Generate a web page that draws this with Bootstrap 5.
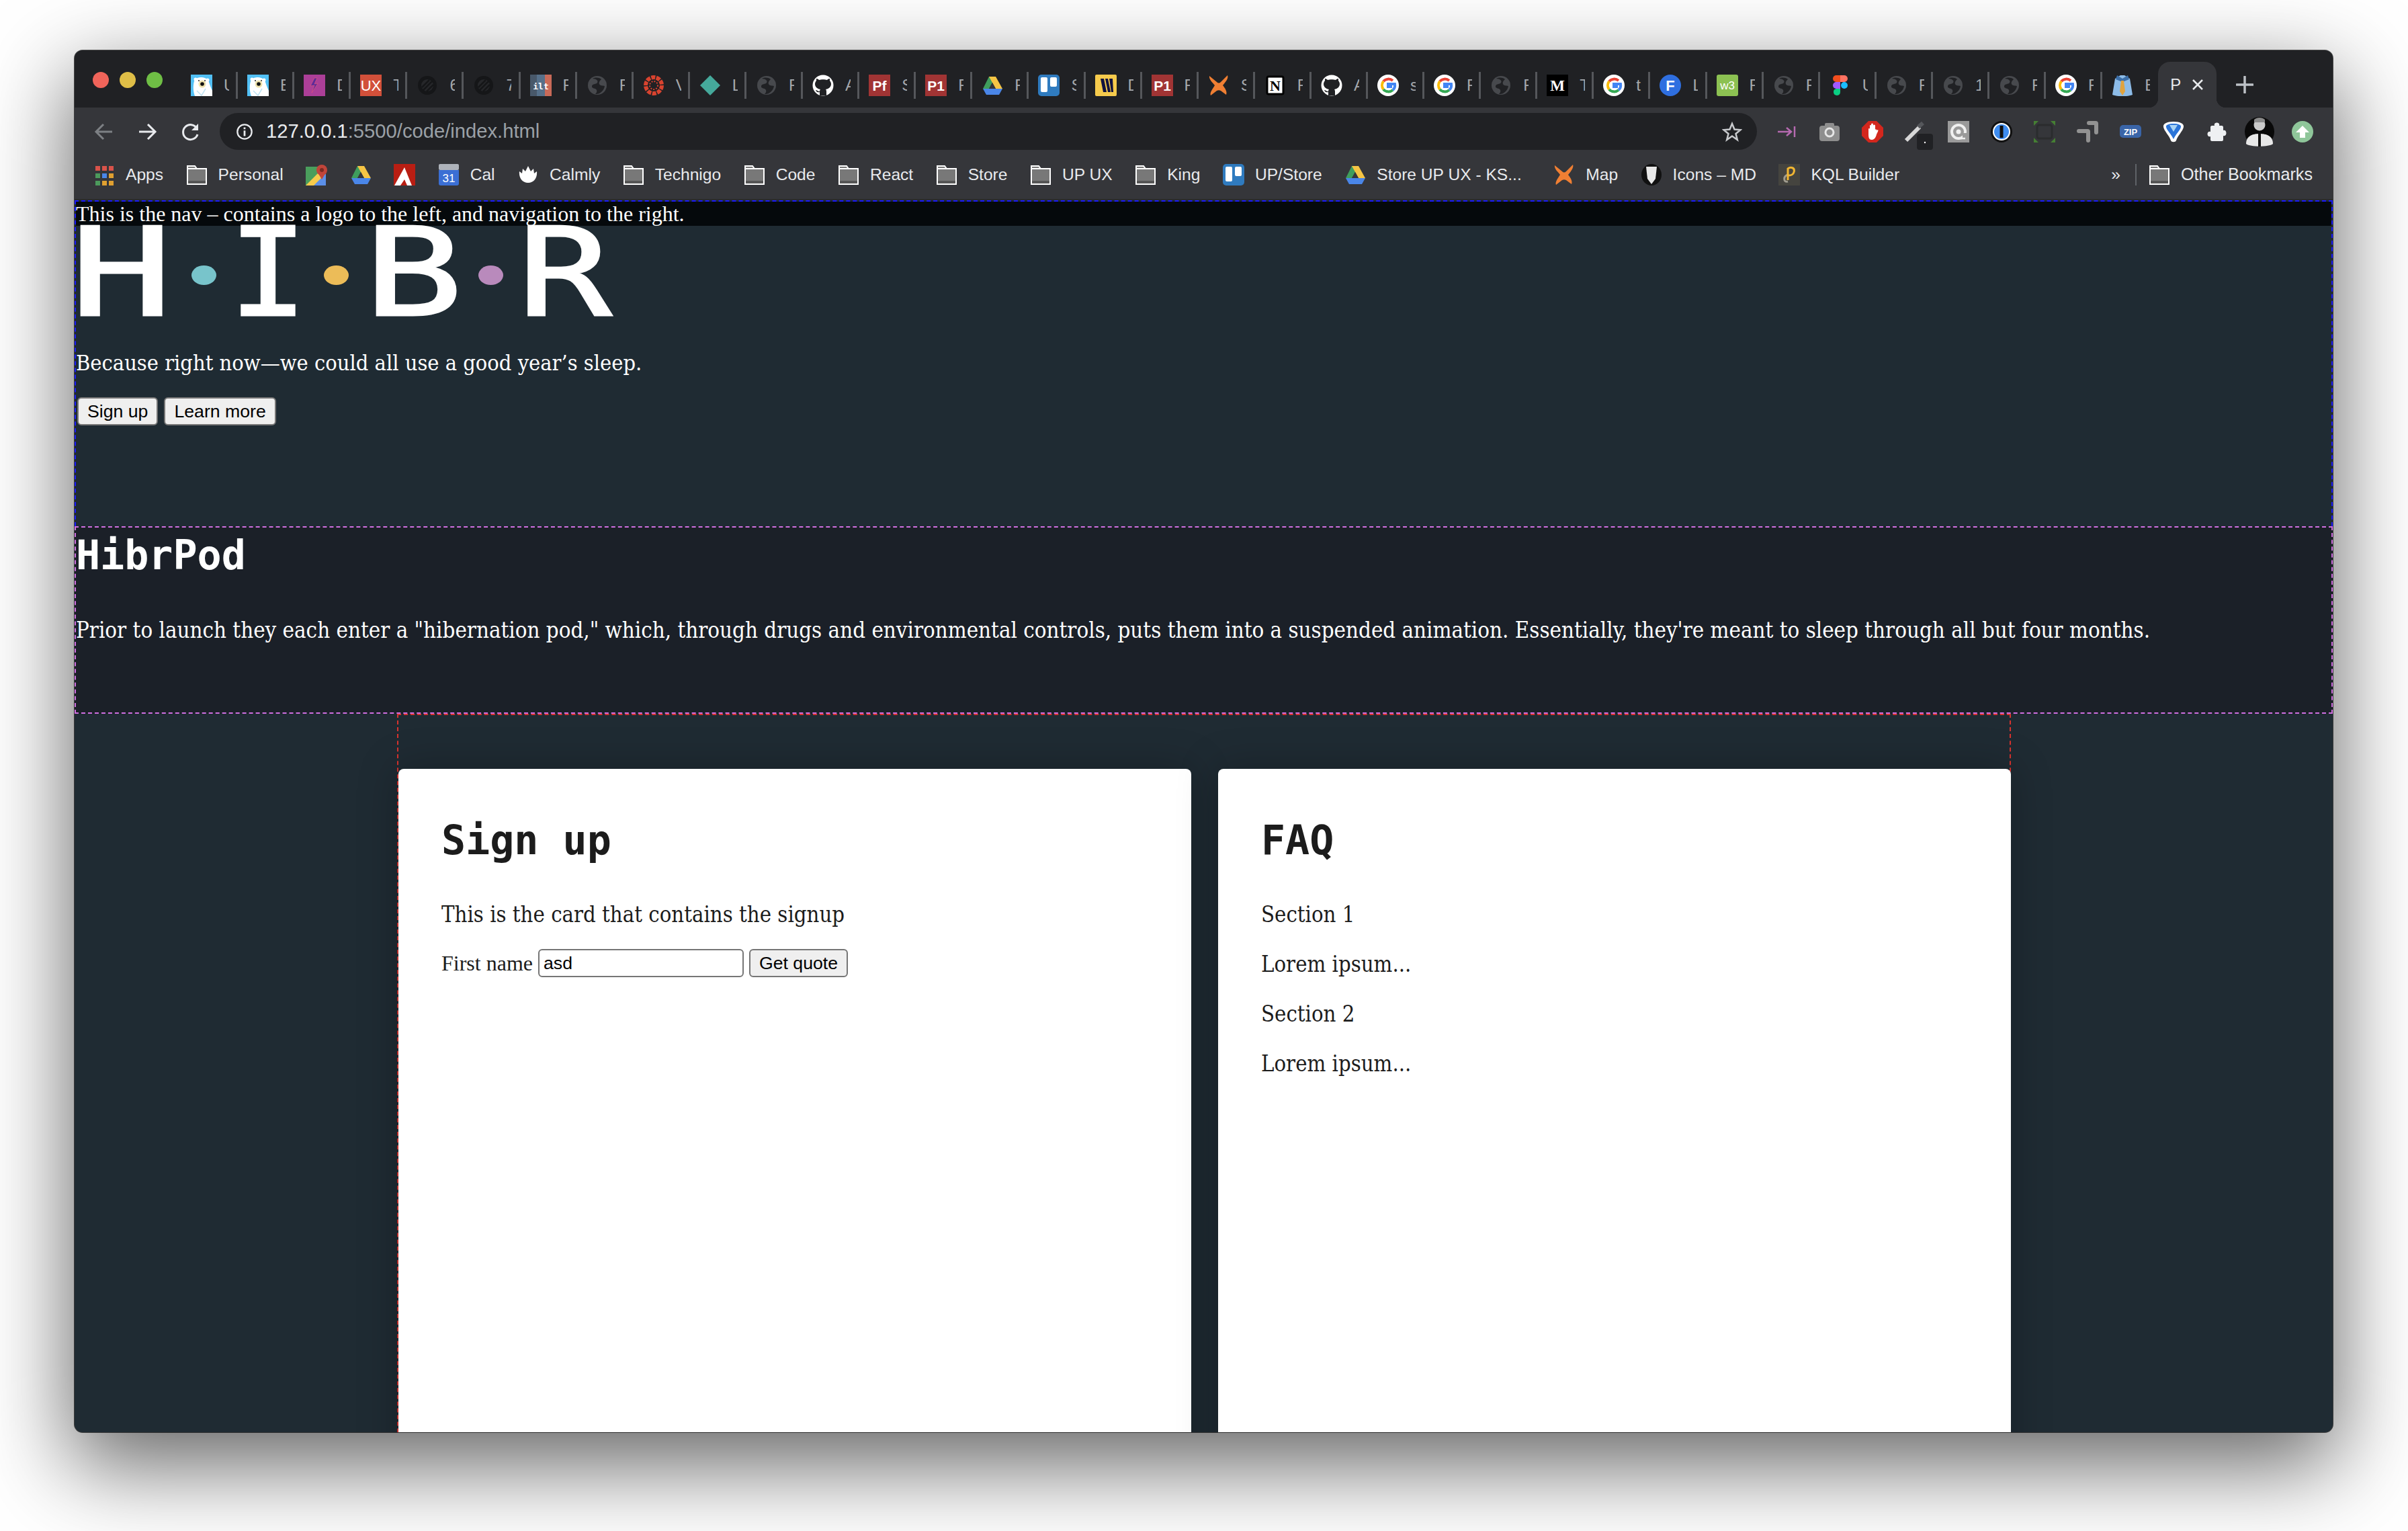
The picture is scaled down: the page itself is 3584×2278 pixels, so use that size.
<!DOCTYPE html>
<html lang="en">

<head>
  <meta charset="UTF-8">
  <meta name="viewport" content="width=device-width, initial-scale=1.0">
  <title>HibrPod</title>
  <link href="https://cdn.jsdelivr.net/npm/bootstrap@5.3.0/dist/css/bootstrap.min.css" rel="stylesheet">
  <style>
    html, body { background: #fff; }
    body { height: 2278px; padding: 75px 112px 0 111px; overflow: hidden; }

    /* browser window */
    .win { height: 2056px; border-radius: 12px; overflow: hidden; background: #1f2b33; box-shadow: 0 44px 130px 6px rgba(0,0,0,.6), 0 0 0 1px #555; }
    .tabstrip { height: 85px; flex: none; background: #202124; padding-left: 159px; font: 24px "Liberation Sans", sans-serif; color: #c8cacd; }
    .lights { width: 159px; margin-left: -159px; padding-left: 27px; gap: 16px; height: 88px; flex: none; }
    .lights i { width: 24px; height: 24px; border-radius: 50%; }
    .lamp-r { background: #f0645a; }
    .lamp-y { background: #dfbe47; }
    .lamp-g { background: #6fbe45; }
    .tabx { width: 84.1px; height: 40px; padding-left: 14px; gap: 17px; overflow: hidden; flex: none; border-right: 3px solid #55575b; margin-top: 32px; }
    .tabx span { width: 8px; overflow: hidden; flex: none; font-size: 24px; opacity: .8; }
    .tabx svg, .bmk svg { width: 32px; height: 32px; flex: none; }
    .tabx.bare { border-right: 0; }
    .tab-on { width: 87px; height: 68px; margin-top: 17px; background: #35363a; border-radius: 18px 18px 0 0; padding-left: 18px; gap: 16px; color: #e8eaed; flex: none; margin-left: -1px; position: relative; }
    .tab-on::before, .tab-on::after { content: ""; position: absolute; bottom: 0; width: 14px; height: 14px; }
    .tab-on::before { left: -14px; background: radial-gradient(circle at 0 0, transparent 14px, #35363a 14.5px); }
    .tab-on::after { right: -14px; background: radial-gradient(circle at 100% 0, transparent 14px, #35363a 14.5px); }
    .tab-plus { margin-left: 29px; width: 26px; height: 26px; margin-top: 38px; flex: none; }

    .toolbar { height: 63px; flex: none; background: #35363a; padding: 8px 0 0 12px; }
    .nav-ico { width: 64px; height: 55px; flex: none; }
    .urlpill { width: 2288px; height: 55px; margin-left: 12px; flex: none; background: #202124; border-radius: 28px; padding: 0 22px 0 24px; gap: 19px; font: 29.2px "Liberation Sans", sans-serif; color: #9aa0a6; }
    .urlpill b { font-weight: 400; color: #e8eaed; }
    .exts { margin-left: 12px; flex: none; }
    .exts div { width: 64px; height: 55px; display: flex; justify-content: center; align-items: center; }
    .exts svg { width: 32px; height: 32px; overflow: visible; }

    .bookmarks { height: 73px; flex: none; background: #35363a; padding: 0 30px 0 28px; gap: 33.5px; font: 24.6px "Liberation Sans", sans-serif; color: #e8eaed; }
    .bmk { gap: 16px; white-space: nowrap; flex: none; }
    .bmk-map { margin-left: 14px; }
    .bmk-other { font-size: 25.2px; }
    .bmk-sep { width: 2px; height: 32px; background: #5f6368; margin: 0 -15px 0 -12px; }
    .thin { height: 2px; flex: none; background: #2a2b2e; }

    /* the page */
    .pagearea { font-family: "DejaVu Serif Condensed", "DejaVu Serif", serif; font-size: 32.6px; color: #fff; line-height: 42px; }
    .head-wrap { border: 2px dashed #1a1aff; border-bottom: 0; height: 485px; }
    .topnav { background: #05090c; height: 36px; font: 32px/36px "Liberation Serif", serif; white-space: nowrap; }
    .logo { height: 137px; position: relative; }
    .logo span { position: absolute; top: 2px; font: 400 182px/137px "DejaVu Sans Mono", monospace; -webkit-text-stroke: 3px #fff; transform-origin: left center; }
    .logo i { position: absolute; width: 37px; height: 29px; top: 59px; border-radius: 50%; }
    .lt-h { left: -8px; transform: scaleX(1.38); }
    .lt-i { left: 228px; transform: scaleX(1.06); }
    .lt-b { left: 429px; transform: scaleX(1.34); }
    .lt-r { left: 658px; transform: scaleX(1.27); }
    .dot-a { left: 172px; background: #78c4cb; }
    .dot-b { left: 369px; background: #ecbc58; }
    .dot-c { left: 599px; background: #b98abc; }
    .tagline { margin: 46px 0 0; font-size: 32.3px; }
    .plain-btn { font: 26.67px "Liberation Sans", sans-serif; line-height: 30px; color: #000; background: #efefef; border: 2px solid #767676; border-radius: 6px; padding: 2px 13px; height: 42px; }
    .plain-btn:hover { background: #e5e5e5; color: #000; border-color: #767676; }
    .cta { gap: 9px; margin: 30px 0 0 2px; }

    .pod { height: 279px; background: #1b2028; border: 2px dashed #cf6fe0; }
    .pod h2, .boxy h2 { font: 700 60px/70px "DejaVu Sans Mono", monospace; margin: 0; }
    .pod h2 { padding-top: 6px; }
    .pod p { margin: 56px 0 0; white-space: nowrap; font-size: 32.77px; }

    .cols { width: 2402px; margin: 0 0 0 480px; border: 2px dashed #d8332f; border-bottom: 0; padding-top: 80px; gap: 40px; height: 1200px; }
    .boxy { width: 1180px; height: 1100px; border: 0; border-radius: 8px; background: #fff; color: #1c1c1c; padding: 69px 64px 0; box-shadow: 0 0 60px rgba(0,0,0,.25); flex: none; }
    .boxy h2 { margin: 0 0 53px; line-height: 74px; }
    .boxy p { margin: 0 0 32px; }
    .signup-line { font: 32px "Liberation Serif", serif; gap: 8px; margin-top: -2px; }
    .firstname { width: 306px; height: 42px; padding: 1px 6px; border: 2px solid #767676; border-radius: 6px; font: 26.67px "Liberation Sans", sans-serif; color: #000; background: #fff; }
  </style>
</head>

<body>
  <svg width="0" height="0" class="position-absolute">
    <defs>
      <symbol id="bear" viewBox="0 0 32 32"><rect width="32" height="32" fill="#52c0f5"/><path d="M6 32C3 24 3 14 6 7c6-4 14-4 20 1 2 6 3 10 6 16v8z" fill="#fff"/><circle cx="7" cy="7" r="2.500" fill="#fff"/><circle cx="25" cy="8" r="2.500" fill="#fff"/><circle cx="12" cy="9" r="1" fill="#222"/><circle cx="21" cy="9" r="1" fill="#222"/><circle cx="17" cy="14" r="5.500" fill="#efe3ad"/><circle cx="17" cy="14" r="2.800" fill="#111"/><path d="M9 24l7 7 6-10" fill="none" stroke="#bfe3f2" stroke-width="1.500"/></symbol>
      <symbol id="bolt" viewBox="0 0 32 32"><rect width="32" height="32" fill="#ac3f98"/><path d="M16 5l-6 12 6-1-4 11 9-14-5 1 4-9z" fill="#5d2a9a" stroke="#e0567a" stroke-width=".7"/></symbol>
      <symbol id="ux" viewBox="0 0 32 32"><rect width="32" height="32" fill="#d2503a"/><text x="16" y="24" text-anchor="middle" font-family="Liberation Sans" font-size="22" fill="#fff">UX</text></symbol>
      <symbol id="darkc" viewBox="0 0 32 32"><circle cx="16" cy="16" r="14" fill="#151618"/><circle cx="16" cy="16" r="9" fill="#26272a"/><path d="M8 19L19 8M10 23L23 10M15 25L25 15" stroke="#151618" stroke-width="2.500"/></symbol>
      <symbol id="ilt" viewBox="0 0 32 32"><rect width="32" height="32" fill="#56708a"/><rect width="10" height="32" fill="#48586a"/><rect x="22" width="10" height="32" fill="#c96a58"/><text x="16" y="22" text-anchor="middle" font-family="DejaVu Sans Mono" font-weight="700" font-size="13" fill="#fff">ilt</text></symbol>
      <symbol id="globe" viewBox="0 0 32 32"><circle cx="16" cy="16" r="14" fill="#47494d"/><path d="M9 6c5 0 9 3 7 6s-7 1-8 5 6 3 7 6-1 5-2 6c6 1 13-5 14-12-3-1-7 0-8-3s1-5 3-7c-4-3-9-3-13-1z" fill="#202124"/></symbol>
      <symbol id="redring" viewBox="0 0 32 32"><circle cx="16" cy="16" r="12" fill="none" stroke="#d8432f" stroke-width="6" stroke-dasharray="6 1.500"/><circle cx="16" cy="16" r="6" fill="none" stroke="#d8432f" stroke-width="2" stroke-dasharray="2 2"/></symbol>
      <symbol id="diamond" viewBox="0 0 32 32"><path d="M16 1l15 15-15 15L1 16z" fill="#45a99b"/></symbol>
      <symbol id="octo" viewBox="0 0 32 32"><circle cx="16" cy="16" r="15.500" fill="#fff"/><path d="M11 31v-5c-4 1-5-1-6-3 2 0 3 2 6 2 0-2 1-3 1-3-5-1-8-4-8-8 0-2 1-4 2-5V6c2 0 3 1 4 2 3-1 9-1 12 0 1-1 2-2 4-2v3c1 1 2 3 2 5 0 4-3 7-8 8 0 0 1 1 1 3v6z" fill="#202124"/></symbol>
      <symbol id="pf" viewBox="0 0 32 32"><rect width="32" height="32" fill="#a13434"/><text x="16" y="24" text-anchor="middle" font-family="Liberation Sans" font-weight="700" font-size="21" fill="#fff">Pf</text></symbol>
      <symbol id="p1" viewBox="0 0 32 32"><rect width="32" height="32" fill="#a13434"/><text x="16" y="24" text-anchor="middle" font-family="Liberation Sans" font-weight="700" font-size="21" fill="#fff">P1</text></symbol>
      <symbol id="drive" viewBox="0 0 32 32"><path d="M11 3h10L11 21H5L2 21z" fill="#3f9d5c"/><path d="M11 3h10l10 18H21z" fill="#f6c544"/><path d="M11 21h20l-5 9H7L2 21z" fill="#4a86e8"/><path d="M11 21h10l-5-9z" fill="#35363a"/></symbol>
      <symbol id="trello" viewBox="0 0 32 32"><rect width="32" height="32" rx="5" fill="#2f7bbf"/><rect x="4" y="4" width="10" height="22" rx="2" fill="#fff"/><rect x="18" y="4" width="10" height="14" rx="2" fill="#fff"/></symbol>
      <symbol id="miro" viewBox="0 0 32 32"><rect width="32" height="32" rx="2" fill="#f6cb4c"/><path d="M8 6h5l4 20h-5zM15 6h4l4 20h-4zM21 6h5l1 20h-3z" fill="#11123e"/></symbol>
      <symbol id="xo" viewBox="0 0 32 32"><path d="M2 2l11 9c2 2 4 2 6 0L29 1c2 5-4 11-7 15 3 4 7 9 5 14l-8-6c-2-1-4-1-6 0l-9 7c-2-4 3-10 6-15C7 12 1 7 2 2z" fill="#f07f33"/></symbol>
      <symbol id="notion" viewBox="0 0 32 32"><rect x="4" y="3" width="24" height="26" rx="2" fill="#fff" stroke="#000" stroke-width="3"/><text x="16" y="24" text-anchor="middle" font-family="Liberation Serif" font-weight="700" font-size="22" fill="#000">N</text></symbol>
      <symbol id="google" viewBox="0 0 32 32"><circle cx="16" cy="16" r="16" fill="#fff"/><path d="M23 9a10 10 0 0 0-14 1" fill="none" stroke="#ea4335" stroke-width="4"/><path d="M9 10a10 10 0 0 0 0 12" fill="none" stroke="#fbbc05" stroke-width="4"/><path d="M9 22a10 10 0 0 0 14 1" fill="none" stroke="#34a853" stroke-width="4"/><path d="M23 23a10 10 0 0 0 3-9H16v4h6" fill="none" stroke="#4285f4" stroke-width="4"/></symbol>
      <symbol id="medium" viewBox="0 0 32 32"><rect width="32" height="32" fill="#000"/><text x="16" y="24" text-anchor="middle" font-family="Liberation Serif" font-weight="700" font-size="23" fill="#fff">M</text></symbol>
      <symbol id="fblue" viewBox="0 0 32 32"><circle cx="16" cy="16" r="16" fill="#2f6fe0"/><text x="16" y="24" text-anchor="middle" font-family="Liberation Sans" font-weight="700" font-size="22" fill="#fff">F</text></symbol>
      <symbol id="w3" viewBox="0 0 32 32"><rect width="32" height="32" rx="3" fill="#8cc152"/><text x="16" y="22" text-anchor="middle" font-family="Liberation Sans" font-size="17" fill="#fff">w3</text></symbol>
      <symbol id="figma" viewBox="0 0 32 32"><path d="M10 1h6v10h-6a5 5 0 0 1 0-10z" fill="#f24e1e"/><path d="M16 1h6a5 5 0 0 1 0 10h-6z" fill="#ff7262"/><path d="M10 11h6v10h-6a5 5 0 0 1 0-10z" fill="#a259ff"/><circle cx="22" cy="16" r="5" fill="#1abcfe"/><path d="M10 21h6v5a5 5 0 1 1-6-5z" fill="#0acf83"/></symbol>
      <symbol id="shirt" viewBox="0 0 32 32"><path d="M5 6l8-5h6l8 5 4 24c-8 3-22 3-30 0z" fill="#8dbce8"/><path d="M8 1l8 5 8-5 2 6-10 4L6 7z" fill="#3c6fa8"/><path d="M14 9h4l2 16-4 6-4-6z" fill="#e0a33e"/></symbol>
      <symbol id="folder" viewBox="0 0 32 32"><path d="M2 3h11l3 4h14v23H2z" fill="#787878" stroke="#fff" stroke-width="2"/><path d="M2 7h28" stroke="#fff" stroke-width="2"/><path d="M3 25h26v4H3z" fill="#555"/></symbol>
      <symbol id="apps" viewBox="0 0 32 32"><rect x="3" y="3" width="7" height="7" fill="#d9534a"/><rect x="13" y="3" width="7" height="7" fill="#d9534a"/><rect x="23" y="3" width="7" height="7" fill="#d9534a"/><rect x="3" y="14" width="7" height="7" fill="#4c9a5c"/><rect x="13" y="14" width="7" height="7" fill="#4a86e8"/><rect x="23" y="14" width="7" height="7" fill="#e0a030"/><rect x="3" y="25" width="7" height="7" fill="#4c9a5c"/><rect x="13" y="25" width="7" height="7" fill="#e0a030"/><rect x="23" y="25" width="7" height="7" fill="#e0a030"/></symbol>
      <symbol id="maps" viewBox="0 0 32 32"><rect y="4" width="30" height="28" fill="#4a9e5c"/><path d="M0 32l22-22 8 8v14z" fill="#f6cb4c"/><path d="M12 32l18-18v18z" fill="#5b8fe8"/><circle cx="24" cy="9" r="8" fill="#c0453a"/><circle cx="24" cy="9" r="3" fill="#7a2a22"/><path d="M18 13l6 10 6-10z" fill="#c0453a"/></symbol>
      <symbol id="adobe" viewBox="0 0 32 32"><rect width="32" height="32" fill="#b91e13"/><path d="M16 5l11 27h-7l-4-9-6 9H1z" fill="#fff"/><path d="M1 0h8L1 22zM23 0h9v24z" fill="#b91e13"/></symbol>
      <symbol id="cal" viewBox="0 0 32 32"><path d="M1 9h30v20a3 3 0 0 1-3 3H4a3 3 0 0 1-3-3z" fill="#3b6fd4"/><rect x="1" width="30" height="9" rx="2" fill="#aeb3ba"/><text x="16" y="27" text-anchor="middle" font-family="Liberation Sans" font-size="17" fill="#fff">31</text></symbol>
      <symbol id="calmly" viewBox="0 0 32 32"><path d="M16 3l4 8 4-4 1 7 4-3c1 9-4 17-13 17S2 20 3 11l4 3 1-7 4 4z" fill="#fff"/></symbol>
      <symbol id="mdicon" viewBox="0 0 32 32"><ellipse cx="16" cy="16" rx="15" ry="16" fill="#111"/><path d="M8 4h16l-2 18-6 8-6-8z" fill="#e8e8e8"/></symbol>
      <symbol id="kql" viewBox="0 0 32 32"><rect width="32" height="32" fill="#45443f"/><path d="M14 26c-7 2-7-8 0-10" fill="none" stroke="#a09c8f" stroke-width="3"/><path d="M14 24V7c4-3 11-2 9 5-1 4-5 5-8 5" fill="none" stroke="#f2b632" stroke-width="3"/></symbol>
    </defs>
  </svg>

  <div class="win d-flex flex-column">
    <!-- tabs -->
    <div class="tabstrip d-flex align-items-start">
      <div class="lights d-flex align-items-center">
        <i class="lamp-r"></i><i class="lamp-y"></i><i class="lamp-g"></i>
      </div>
      <div class="tabx d-flex align-items-center"><svg><use href="#bear"/></svg><span>U</span></div>
      <div class="tabx d-flex align-items-center"><svg><use href="#bear"/></svg><span>E</span></div>
      <div class="tabx d-flex align-items-center"><svg><use href="#bolt"/></svg><span>D</span></div>
      <div class="tabx d-flex align-items-center"><svg><use href="#ux"/></svg><span>T</span></div>
      <div class="tabx d-flex align-items-center"><svg><use href="#darkc"/></svg><span>6</span></div>
      <div class="tabx d-flex align-items-center"><svg><use href="#darkc"/></svg><span>7</span></div>
      <div class="tabx d-flex align-items-center"><svg><use href="#ilt"/></svg><span>F</span></div>
      <div class="tabx d-flex align-items-center"><svg><use href="#globe"/></svg><span>F</span></div>
      <div class="tabx d-flex align-items-center"><svg><use href="#redring"/></svg><span>V</span></div>
      <div class="tabx d-flex align-items-center"><svg><use href="#diamond"/></svg><span>L</span></div>
      <div class="tabx d-flex align-items-center"><svg><use href="#globe"/></svg><span>F</span></div>
      <div class="tabx d-flex align-items-center"><svg><use href="#octo"/></svg><span>A</span></div>
      <div class="tabx d-flex align-items-center"><svg><use href="#pf"/></svg><span>S</span></div>
      <div class="tabx d-flex align-items-center"><svg><use href="#p1"/></svg><span>F</span></div>
      <div class="tabx d-flex align-items-center"><svg><use href="#drive"/></svg><span>F</span></div>
      <div class="tabx d-flex align-items-center"><svg><use href="#trello"/></svg><span>S</span></div>
      <div class="tabx d-flex align-items-center"><svg><use href="#miro"/></svg><span>D</span></div>
      <div class="tabx d-flex align-items-center"><svg><use href="#p1"/></svg><span>F</span></div>
      <div class="tabx d-flex align-items-center"><svg><use href="#xo"/></svg><span>S</span></div>
      <div class="tabx d-flex align-items-center"><svg><use href="#notion"/></svg><span>F</span></div>
      <div class="tabx d-flex align-items-center"><svg><use href="#octo"/></svg><span>A</span></div>
      <div class="tabx d-flex align-items-center"><svg><use href="#google"/></svg><span>s</span></div>
      <div class="tabx d-flex align-items-center"><svg><use href="#google"/></svg><span>F</span></div>
      <div class="tabx d-flex align-items-center"><svg><use href="#globe"/></svg><span>F</span></div>
      <div class="tabx d-flex align-items-center"><svg><use href="#medium"/></svg><span>T</span></div>
      <div class="tabx d-flex align-items-center"><svg><use href="#google"/></svg><span>t</span></div>
      <div class="tabx d-flex align-items-center"><svg><use href="#fblue"/></svg><span>L</span></div>
      <div class="tabx d-flex align-items-center"><svg><use href="#w3"/></svg><span>F</span></div>
      <div class="tabx d-flex align-items-center"><svg><use href="#globe"/></svg><span>F</span></div>
      <div class="tabx d-flex align-items-center"><svg><use href="#figma"/></svg><span>U</span></div>
      <div class="tabx d-flex align-items-center"><svg><use href="#globe"/></svg><span>F</span></div>
      <div class="tabx d-flex align-items-center"><svg><use href="#globe"/></svg><span>1</span></div>
      <div class="tabx d-flex align-items-center"><svg><use href="#globe"/></svg><span>F</span></div>
      <div class="tabx d-flex align-items-center"><svg><use href="#google"/></svg><span>F</span></div>
      <div class="tabx bare d-flex align-items-center"><svg><use href="#shirt"/></svg><span>E</span></div>
      <div class="tab-on d-flex align-items-center"><span>P</span><svg width="18" height="18" viewBox="0 0 18 18"><path d="M2 2l14 14M16 2L2 16" stroke="#e8eaed" stroke-width="2.500"/></svg></div>
      <svg class="tab-plus" viewBox="0 0 26 26"><path d="M13 1v24M1 13h24" stroke="#bdc1c6" stroke-width="3.500" stroke-linecap="round"/></svg>
    </div>

    <!-- address bar -->
    <div class="toolbar d-flex align-items-start">
      <div class="nav-ico d-flex align-items-center justify-content-center"><svg width="30" height="30" viewBox="0 0 30 30"><path d="M27 15H4M14 4L3 15l11 11" fill="none" stroke="#7d8084" stroke-width="3"/></svg></div>
      <div class="nav-ico d-flex align-items-center justify-content-center"><svg width="30" height="30" viewBox="0 0 30 30"><path d="M3 15h23M16 4l11 11-11 11" fill="none" stroke="#e8eaed" stroke-width="3"/></svg></div>
      <div class="nav-ico d-flex align-items-center justify-content-center"><svg width="30" height="30" viewBox="0 0 30 30"><path d="M25 10a11 11 0 1 0 1 9" fill="none" stroke="#e8eaed" stroke-width="3"/><path d="M27 3v10H17z" fill="#e8eaed"/></svg></div>
      <div class="urlpill d-flex align-items-center">
        <svg class="flex-shrink-0" width="26" height="26" viewBox="0 0 28 28"><circle cx="14" cy="14" r="11.500" fill="none" stroke="#e8eaed" stroke-width="2.500"/><path d="M14 12v9M14 7v3" stroke="#e8eaed" stroke-width="3"/></svg>
        <div class="flex-grow-1"><b>127.0.0.1</b>:5500/code/index.html</div>
        <svg width="30" height="30" viewBox="0 0 30 30"><path d="M15 3l3.500 8.500 9 .7-7 5.800 2.300 9L15 21.500 7.200 27l2.300-9-7-5.800 9-.7z" fill="none" stroke="#c8cacd" stroke-width="2.500"/></svg>
      </div>
      <div class="exts d-flex">
        <div><svg viewBox="0 0 32 32"><path d="M3 16h20M16 10l7 6-7 6" fill="none" stroke="#b56ab0" stroke-width="2.500"/><path d="M28 8v16" stroke="#b56ab0" stroke-width="2.500"/></svg></div>
        <div><svg viewBox="0 0 32 32"><rect x="1" y="7" width="30" height="23" rx="4" fill="#8e8e8e"/><rect x="9" y="3" width="14" height="8" rx="2" fill="#8e8e8e"/><circle cx="16" cy="17" r="6" fill="none" stroke="#e6e6e6" stroke-width="3"/></svg></div>
        <div><svg viewBox="0 0 32 32"><path d="M10 0h12l10 10v12L22 32H10L0 22V10z" fill="#d3271d"/><path d="M10 22V12a1 1 0 0 1 2 0V7a1 1 0 0 1 2 0V5a1 1 0 0 1 3 0v2a1 1 0 0 1 3 0v6a1 1 0 0 1 2 1l2-1c1 1 0 3-2 7-1 4-3 8-7 8s-5-3-5-8z" fill="#fff"/></svg></div>
        <div><svg viewBox="0 0 32 32"><path d="M2 29L22 9" stroke="#d8d8d8" stroke-width="6"/><path d="M20 9l7-6" stroke="#55575b" stroke-width="6"/><rect x="18" y="19" width="24" height="24" rx="4" fill="#202124"/><circle cx="30" cy="32" r="1.200" fill="#fff"/></svg></div>
        <div><svg viewBox="0 0 32 32"><rect width="32" height="32" fill="#9a9a9a"/><circle cx="16" cy="16" r="10" fill="none" stroke="#f0f0f0" stroke-width="4"/><circle cx="16" cy="16" r="3.500" fill="#f0f0f0"/><rect x="22" y="18" width="7" height="9" fill="#9a9a9a"/><path d="M20 26h6" stroke="#f0f0f0" stroke-width="2.500"/></svg></div>
        <div><svg viewBox="0 0 32 32"><circle cx="16" cy="16" r="16" fill="#111"/><circle cx="16" cy="16" r="13" fill="#fff"/><circle cx="16" cy="16" r="11" fill="#3d8cf0"/><rect x="13.500" y="7" width="5" height="18" fill="#111"/></svg></div>
        <div><svg viewBox="0 0 32 32"><path d="M0 0h7L0 7zM32 0h-7l7 7zM0 32v-7l7 7zM32 32v-7l-7 7z" fill="#457f33"/><rect x="5" y="6" width="22" height="20" rx="3" fill="none" stroke="#2b2c2e" stroke-width="3"/></svg></div>
        <div><svg viewBox="0 0 32 32"><path d="M18 0h10a4 4 0 0 1 4 4v13a3 3 0 0 1-6 0V6h-8a3 3 0 0 1 0-6zM3 12h13a4 4 0 0 1 4 4v13a3 3 0 0 1-6 0V18H3a3 3 0 0 1 0-6z" fill="#929292"/></svg></div>
        <div><svg viewBox="0 0 32 32"><rect y="6" width="32" height="19" rx="5" fill="#3a65a8"/><text x="16" y="21" text-anchor="middle" font-family="Liberation Sans" font-weight="700" font-size="13" fill="#fff">ZIP</text></svg></div>
        <div><svg viewBox="0 0 32 32"><path d="M16 1C6 1 0 4 1 9c1 6 9 13 11 20 1 3 7 3 8 0 2-7 10-14 11-20 1-5-5-8-15-8z" fill="#fff"/><path d="M16 4C9 4 4 6 5 9c1 5 8 11 11 18 3-7 10-13 11-18 1-3-4-5-11-5z" fill="#2a74d8"/><path d="M10 6h12l-6 10z" fill="#a9d4f5"/></svg></div>
        <div><svg viewBox="0 0 32 32"><path d="M9 7h4c-2-6 9-6 7 0h4c1 0 2 1 2 2v5c6-2 6 10 0 8v6c0 1-1 2-2 2H9c-1 0-2-1-2-2v-5c-6 2-6-9 0-7V9c0-1 1-2 2-2z" fill="#eef0f2"/></svg></div>
        <div><svg viewBox="0 0 32 32"><circle cx="16" cy="16" r="22" fill="#090909"/><circle cx="16" cy="6" r="8.500" fill="#c9c9c9"/><path d="M8-2c4-4 12-4 16 0v4H8z" fill="#8a8a8a"/><path d="M-4 34c0-12 10-15 20-15s20 3 20 15c-6 5-34 5-40 0z" fill="#e8e8e8"/><path d="M16 19v19" stroke="#111" stroke-width="4"/></svg></div>
        <div><svg viewBox="0 0 32 32"><circle cx="16" cy="16" r="16" fill="#8fc69a"/><path d="M16 7L6 17h6v8h8v-8h6z" fill="#fff"/></svg></div>
      </div>
    </div>

    <!-- bookmarks bar -->
    <div class="bookmarks d-flex align-items-center">
      <div class="bmk d-flex align-items-center"><svg><use href="#apps"/></svg>Apps</div>
      <div class="bmk d-flex align-items-center"><svg><use href="#folder"/></svg>Personal</div>
      <div class="bmk d-flex align-items-center"><svg><use href="#maps"/></svg></div>
      <div class="bmk d-flex align-items-center"><svg><use href="#drive"/></svg></div>
      <div class="bmk d-flex align-items-center"><svg><use href="#adobe"/></svg></div>
      <div class="bmk d-flex align-items-center"><svg><use href="#cal"/></svg>Cal</div>
      <div class="bmk d-flex align-items-center"><svg><use href="#calmly"/></svg>Calmly</div>
      <div class="bmk d-flex align-items-center"><svg><use href="#folder"/></svg>Technigo</div>
      <div class="bmk d-flex align-items-center"><svg><use href="#folder"/></svg>Code</div>
      <div class="bmk d-flex align-items-center"><svg><use href="#folder"/></svg>React</div>
      <div class="bmk d-flex align-items-center"><svg><use href="#folder"/></svg>Store</div>
      <div class="bmk d-flex align-items-center"><svg><use href="#folder"/></svg>UP UX</div>
      <div class="bmk d-flex align-items-center"><svg><use href="#folder"/></svg>King</div>
      <div class="bmk d-flex align-items-center"><svg><use href="#trello"/></svg>UP/Store</div>
      <div class="bmk d-flex align-items-center"><svg><use href="#drive"/></svg>Store UP UX - KS...</div>
      <div class="bmk bmk-map d-flex align-items-center"><svg><use href="#xo"/></svg>Map</div>
      <div class="bmk d-flex align-items-center"><svg><use href="#mdicon"/></svg>Icons – MD</div>
      <div class="bmk d-flex align-items-center"><svg><use href="#kql"/></svg>KQL Builder</div>
      <div class="bmk ms-auto">»</div>
      <div class="bmk-sep"></div>
      <div class="bmk bmk-other d-flex align-items-center"><svg><use href="#folder"/></svg>Other Bookmarks</div>
    </div>
    <div class="thin"></div>

    <!-- the page under construction -->
    <div class="pagearea flex-grow-1">
      <div class="head-wrap">
        <div class="topnav">This is the nav – contains a logo to the left, and navigation to the right.</div>
        <div class="logo">
          <span class="lt-h">H</span>
          <i class="dot-a"></i>
          <span class="lt-i">I</span>
          <i class="dot-b"></i>
          <span class="lt-b">B</span>
          <i class="dot-c"></i>
          <span class="lt-r">R</span>
        </div>
        <p class="tagline">Because right now—we could all use a good year’s sleep.</p>
        <div class="cta d-flex">
          <button type="button" class="btn plain-btn">Sign up</button>
          <button type="button" class="btn plain-btn">Learn more</button>
        </div>
      </div>
      <div class="pod">
        <h2>HibrPod</h2>
        <p>Prior to launch they each enter a "hibernation pod," which, through drugs and environmental controls, puts them into a suspended animation. Essentially, they're meant to sleep through all but four months.</p>
      </div>
      <div class="cols d-flex">
        <div class="card boxy">
          <h2>Sign up</h2>
          <p>This is the card that contains the signup</p>
          <form class="signup-line d-flex align-items-center">
            <label for="fname">First name</label>
            <input id="fname" class="firstname" type="text" value="asd">
            <button type="button" class="btn plain-btn">Get quote</button>
          </form>
        </div>
        <div class="card boxy">
          <h2>FAQ</h2>
          <p>Section 1</p>
          <p>Lorem ipsum...</p>
          <p>Section 2</p>
          <p>Lorem ipsum...</p>
        </div>
      </div>
    </div>
  </div>

  <script src="https://cdn.jsdelivr.net/npm/bootstrap@5.3.0/dist/js/bootstrap.bundle.min.js"></script>
</body>

</html>
